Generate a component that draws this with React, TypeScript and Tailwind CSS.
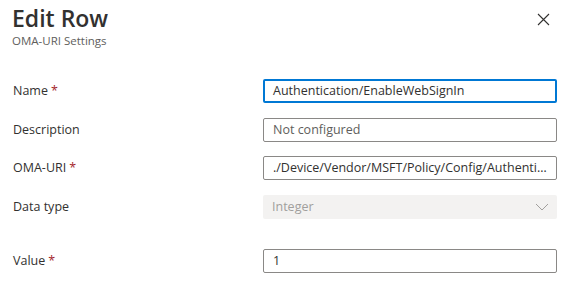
import React from 'react';

const font = { fontFamily: '"Open Sans", "Noto Sans", sans-serif' };

const Label = ({ text, required }: { text: string; required?: boolean }) => (
  <div className="w-[250px] shrink-0 text-[12.5px] text-[#323130]">
    {text}
    {required && <span className="ml-[3px] text-[#a4262c]">*</span>}
  </div>
);

const TextBox = ({ value, focused, placeholder }: { value: string; focused?: boolean; placeholder?: boolean }) => (
  <div
    className={
      focused
        ? 'flex h-[24px] w-[294px] items-center overflow-hidden rounded-[2px] border-2 border-[#0078d4] px-[8px]'
        : 'flex h-[24px] w-[294px] items-center overflow-hidden rounded-[2px] border border-[#8a8886] px-[9px]'
    }
  >
    <span className={placeholder ? 'whitespace-nowrap text-[12.5px] text-[#605e5c]' : 'whitespace-nowrap text-[12.5px] text-[#323130]'}>
      {value}
    </span>
  </div>
);

export default function App() {
  return (
    <div className="h-[287px] w-[570px] bg-white" style={font}>
      <div className="flex items-start justify-between pl-[12px] pr-[20px] pt-[2px]">
        <div>
          <h1 className="text-[23px] font-semibold leading-[32px] text-[#323130]">Edit Row</h1>
          <div className="text-[11.5px] leading-[14px] text-[#605e5c]">OMA-URI Settings</div>
        </div>
        <svg className="mt-[11px]" width="13" height="13" viewBox="0 0 13 13">
          <path d="M1 1 L12 12 M12 1 L1 12" stroke="#323130" strokeWidth="1.1" fill="none" />
        </svg>
      </div>

      <div className="mt-[31px] flex flex-col pl-[13px]">
        <div className="flex h-[24px] items-center">
          <Label text="Name" required />
          <TextBox value="Authentication/EnableWebSignIn" focused />
        </div>
        <div className="mt-[15px] flex h-[24px] items-center">
          <Label text="Description" />
          <TextBox value="Not configured" placeholder />
        </div>
        <div className="mt-[14px] flex h-[24px] items-center">
          <Label text="OMA-URI" required />
          <TextBox value="./Device/Vendor/MSFT/Policy/Config/Authenti…" />
        </div>
        <div className="mt-[15px] flex h-[24px] items-center">
          <Label text="Data type" />
          <div className="flex h-[24px] w-[294px] items-center justify-between rounded-[2px] bg-[#f3f2f1] pl-[9px] pr-[8px]">
            <span className="text-[12.5px] text-[#a19f9d]">Integer</span>
            <svg width="14" height="8" viewBox="0 0 14 8">
              <path d="M1 1 L7 7 L13 1" stroke="#a19f9d" strokeWidth="1" fill="none" />
            </svg>
          </div>
        </div>
        <div className="mt-[30px] flex h-[24px] items-center">
          <Label text="Value" required />
          <TextBox value="1" />
        </div>
      </div>
    </div>
  );
}
